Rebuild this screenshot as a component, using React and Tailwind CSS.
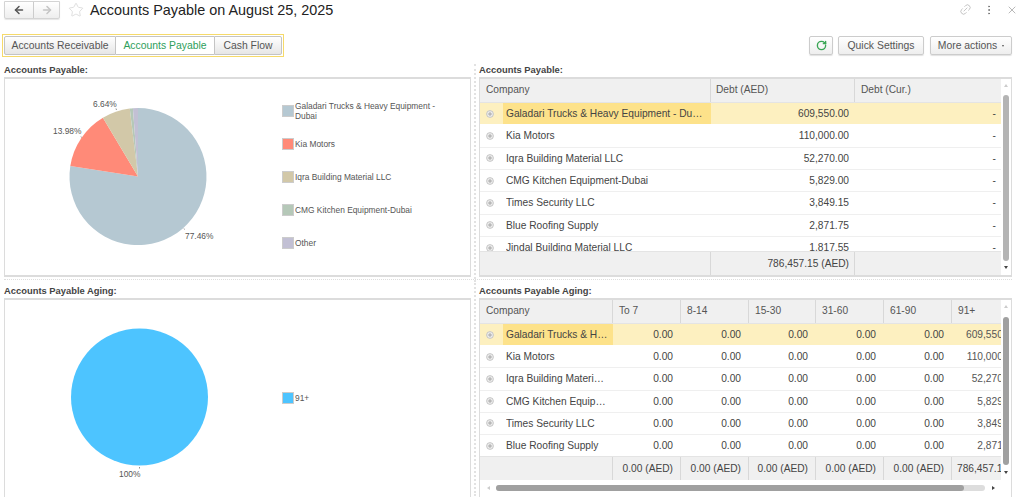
import React from 'react'
import { ArrowLeft, ArrowRight, Star, Link2, EllipsisVertical, X, RotateCw } from 'lucide-react'

const payable = [
  ['Galadari Trucks & Heavy Equipment - Dubai', '609,550.00'],
  ['Kia Motors', '110,000.00'],
  ['Iqra Building Material LLC', '52,270.00'],
  ['CMG Kitchen Equipment-Dubai', '5,829.00'],
  ['Times Security LLC', '3,849.15'],
  ['Blue Roofing Supply', '2,871.75'],
  ['Jindal Building Material LLC', '1,817.55'],
]

const slices = [
  [77.46, '#b5c8d2'],
  [13.98, '#ff8a78'],
  [6.64, '#d2c8a8'],
  [0.74, '#b5c8b8'],
  [1.18, '#c2c0d4'],
]

const legend = [
  ['Galadari Trucks & Heavy Equipment - Dubai', '#b5c8d2'],
  ['Kia Motors', '#ff8a78'],
  ['Iqra Building Material LLC', '#d2c8a8'],
  ['CMG Kitchen Equipment-Dubai', '#b5c8b8'],
  ['Other', '#c2c0d4'],
]

const agingCols = ['w-[68px]', 'w-[68px]', 'w-[67px]', 'w-[68px]', 'w-[68px]', 'w-[68px]']

const Pie = () => {
  let start = 0
  const point = (pct) => {
    const a = (pct / 100) * 2 * Math.PI
    return [100 + 68.5 * Math.sin(a), 97.6 - 68.5 * Math.cos(a)]
  }
  return (
    <svg width="200" height="196" viewBox="0 0 200 196" className="shrink-0 ml-[33px]">
      {slices.map(([pct, color]) => {
        const [x1, y1] = point(start)
        const [x2, y2] = point(start + pct)
        const large = pct > 50 ? 1 : 0
        start += pct
        return <path key={color} d={`M100 97.6 L${x1} ${y1} A68.5 68.5 0 ${large} 1 ${x2} ${y2} Z`} fill={color} />
      })}
      <g fontSize="8.4" fill="#555" fontFamily="'Liberation Sans', Arial, sans-serif">
        <text x="55" y="28">6.64%</text>
        <text x="15" y="55">13.98%</text>
        <text x="147" y="160">77.46%</text>
      </g>
      <path d="M78 29.500l.5 1.500M43 57.500l.5 1M146 149.500l.5 1" stroke="#666" strokeWidth="0.7" />
    </svg>
  )
}

const FullPie = () => (
  <svg width="200" height="196" viewBox="0 0 200 196" className="shrink-0 ml-[33px]">
    <circle cx="101.5" cy="97" r="68.5" fill="#4dc4ff" />
    <text x="81" y="177" fontSize="8.4" fill="#555" fontFamily="'Liberation Sans', Arial, sans-serif">100%</text>
    <path d="M101.5 167v1.500" stroke="#666" strokeWidth="0.7" />
  </svg>
)

const Swatch = ({ color }) => (
  <span className="w-[12px] h-[12px] shrink-0 border border-[#ccc]" style={{ backgroundColor: color }} />
)

const Expander = () => (
  <svg width="8" height="8" viewBox="0 0 8 8" className="shrink-0 ml-[6px] mr-[3px]">
    <circle cx="4" cy="4" r="3.400" fill="#eee" stroke="#bbb" strokeWidth="0.8" />
    <path d="M2 4h4M4 2v4" stroke="#999" strokeWidth="0.8" />
  </svg>
)

const VScroll = ({ thumb, height, thumbClass }) => (
  <div className={`relative w-[10px] shrink-0 bg-white ${height}`}>
    <span className="absolute left-[3px] top-[5px] border-x-[2px] border-b-[3px] border-x-transparent border-b-[#ccc]" />
    <span className={`absolute left-[2px] w-[6px] rounded-[3px] ${thumb} ${thumbClass}`} />
    <span className="absolute left-[3px] bottom-[6px] border-x-[2px] border-t-[3px] border-x-transparent border-t-[#444]" />
  </div>
)

const GrayButton = ({ children, className }) => (
  <button className={`h-[19px] flex items-center justify-center border border-[#ccc] rounded-[2px] bg-gradient-to-b from-white to-[#eeeeee] shadow-[0_1px_1px_rgba(0,0,0,0.12)] text-[10.4px] text-[#555] ${className}`}>
    {children}
  </button>
)

const PanelTitle = ({ children }) => (
  <div className="h-[13px] text-[9.4px] leading-[11px] font-bold text-[#444] whitespace-nowrap">{children}</div>
)

const PayableTable = () => (
  <div className="flex h-[200px] border-2 border-[#dcdcdc] border-x-[1px] text-[10.2px] text-[#444]">
    <div className="w-[521px] flex flex-col">
      <div className="flex h-[24px] bg-[#f0f0f0] items-center text-[#555] shrink-0 border-b border-[#e4e4e4]">
        <div className="w-[231px] h-full flex items-center pl-[6px] pb-[1px] border-r border-[#d8d8d8]">Company</div>
        <div className="w-[144px] h-full flex items-center pl-[5px] pb-[1px] border-r border-[#d8d8d8]">Debt (AED)</div>
        <div className="flex-1 pl-[6px] pb-[1px]">Debt (Cur.)</div>
      </div>
      <div className="flex-1 overflow-hidden">
        {payable.map(([name, debt], i) => (
          <div key={name} className={`flex h-[22.33px] items-center border-b ${i === 0 ? 'bg-[#fdf0c0] border-white' : 'bg-white border-[#efefef]'}`}>
            <div className="w-[231px] h-full flex items-center">
              <Expander />
              <div className={`flex-1 h-full flex items-center pl-[3px] ml-[6px] min-w-0 ${i === 0 ? 'bg-[#fde28a]' : ''}`}>
                <span className="truncate pr-[6px]">{name}</span>
              </div>
            </div>
            <div className="w-[144px] text-right pr-[6px]">{debt}</div>
            <div className="flex-1 text-right pr-[5px]">-</div>
          </div>
        ))}
      </div>
      <div className="flex h-[24px] bg-[#f0f0f0] items-center shrink-0 border-t border-[#e4e4e4]">
        <div className="w-[231px] h-full border-r border-[#d8d8d8]" />
        <div className="w-[144px] h-full flex items-center justify-end pr-[5px] border-r border-[#d8d8d8]">786,457.15 (AED)</div>
      </div>
    </div>
    <VScroll height="h-full" thumb="top-[16px] h-[166px]" thumbClass="bg-[#b4b4b4]" />
  </div>
)

const AgingTable = () => (
  <div className="h-[200px] border-t-2 border-x border-[#dcdcdc] text-[10.2px] text-[#444] flex flex-col">
    <div className="flex h-[180px] shrink-0">
      <div className="w-[521px] flex flex-col overflow-hidden">
        <div className="flex h-[24px] bg-[#f0f0f0] items-center text-[#555] shrink-0 border-b border-[#e4e4e4]">
          <div className="w-[133px] shrink-0 h-full flex items-center pl-[6px] pb-[1px] border-r border-[#d8d8d8]">Company</div>
          {['To 7', '8-14', '15-30', '31-60', '61-90', '91+'].map((h, i) => (
            <div key={h} className={`${agingCols[i]} shrink-0 h-full flex items-center pl-[6px] pb-[1px] border-r border-[#d8d8d8]`}>{h}</div>
          ))}
        </div>
        <div className="flex-1 overflow-hidden">
          {payable.slice(0, 6).map(([name, debt], i) => (
            <div key={name} className={`flex h-[22.2px] items-center border-b ${i === 0 ? 'bg-[#fdf0c0] border-white' : 'bg-white border-[#efefef]'}`}>
              <div className="w-[133px] shrink-0 h-full flex items-center">
                <Expander />
                <div className={`flex-1 h-full flex items-center pl-[3px] ml-[6px] min-w-0 ${i === 0 ? 'bg-[#fde28a]' : ''}`}>
                  <span className="truncate pr-[5px]">{name}</span>
                </div>
              </div>
              {agingCols.map((w, c) => (
                <div key={c} className={`shrink-0 text-right ${c === 5 ? 'w-[73px] pr-[8px] text-[#555]' : `${w} pr-[8px]`}`}>{c === 5 ? debt : '0.00'}</div>
              ))}
            </div>
          ))}
        </div>
        <div className="flex h-[24px] bg-[#f0f0f0] items-center shrink-0 border-t border-[#e4e4e4]">
          <div className="w-[133px] shrink-0 h-full border-r border-[#d8d8d8]" />
          {agingCols.map((w, c) => (
            <div key={c} className={`shrink-0 h-full flex items-center whitespace-nowrap ${c === 5 ? 'w-[73px] justify-start pl-[5px]' : `${w} justify-end pr-[7px] border-r border-[#d8d8d8]`}`}>{c === 5 ? '786,457.15 (AED)' : '0.00 (AED)'}</div>
          ))}
        </div>
      </div>
      <VScroll height="h-full" thumb="top-[17px] h-[148px]" thumbClass="bg-[#a0a0a0]" />
    </div>
    <div className="flex items-center h-[15px] pl-[7px]">
      <span className="border-y-[2px] border-r-[3px] border-y-transparent border-r-[#ccc]" />
      <div className="ml-[6px] w-[489px] h-[6px] rounded-[3px] bg-[#dddddd]">
        <div className="w-[468px] h-full rounded-[3px] bg-[#a0a0a0]" />
      </div>
      <span className="ml-[7px] border-y-[2px] border-l-[3px] border-y-transparent border-l-[#444]" />
    </div>
  </div>
)

export default function App() {
  return (
    <div className="w-[1024px] h-[497px] overflow-hidden bg-white font-['Liberation_Sans',Arial,sans-serif]">
      <header className="flex items-center h-[19px] pl-[4px] pr-[6px]">
        <div className="flex h-[18px] w-[56px] border border-[#d4d4d4] rounded-b-[2px] bg-gradient-to-b from-white to-[#eeeeee] shadow-[0_1px_1px_rgba(0,0,0,0.1)]">
          <div className="w-[29px] flex items-center justify-center border-r border-[#ccc]">
            <ArrowLeft size={12} strokeWidth={3} className="text-[#555]" />
          </div>
          <div className="flex-1 flex items-center justify-center">
            <ArrowRight size={12} strokeWidth={3} className="text-[#c4c4c4]" />
          </div>
        </div>
        <Star size={16} strokeWidth={1} className="ml-[8px] text-[#cfcfcf]" />
        <h1 className="ml-[6px] text-[14.4px] leading-[18px] text-[#222]">Accounts Payable on August 25, 2025</h1>
        <Link2 size={13} strokeWidth={1.2} className="ml-auto text-[#aaa] -rotate-45" />
        <EllipsisVertical size={12} strokeWidth={2} className="ml-[11px] text-[#777]" />
        <X size={12} strokeWidth={1.2} className="ml-[11px] text-[#888]" />
      </header>

      <div className="flex items-start justify-between h-[30px] mt-[15px] pl-[2px] pr-[12px]">
        <div className="flex h-[23px] p-[1px] border border-[#f6da6a]">
          <button className="w-[112px] h-[19px] border border-[#c4c4c4] rounded-l-[2px] bg-gradient-to-b from-white to-[#e6e6e6] text-[10.4px] text-[#555]">Accounts Receivable</button>
          <button className="w-[98px] h-[19px] border-y border-[#c4c4c4] bg-white text-[10.4px] text-[#2e9e5b]">Accounts Payable</button>
          <button className="w-[68px] h-[19px] border border-[#c4c4c4] rounded-r-[2px] bg-gradient-to-b from-white to-[#e6e6e6] text-[10.4px] text-[#555]">Cash Flow</button>
        </div>
        <div className="flex mt-[2px]">
          <GrayButton className="w-[24px]"><RotateCw size={11} strokeWidth={3} className="text-[#3aa655]" /></GrayButton>
          <GrayButton className="w-[86px] ml-[5px]">Quick Settings</GrayButton>
          <GrayButton className="w-[82px] ml-[6px] gap-[5px]">
            More actions
            <span className="border-x-[1.5px] border-t-[2px] border-x-transparent border-t-[#555]" />
          </GrayButton>
        </div>
      </div>

      <section className="flex h-[216px] border-b border-dotted border-[#dddddd] mx-[4px] w-[1008px]">
        <div className="w-[467px] mr-[3px]">
          <PanelTitle>Accounts Payable:</PanelTitle>
          <div className="flex h-[200px] border-2 border-[#dcdcdc] border-x-[1px]">
            <Pie />
            <ul className="ml-[44px] w-[160px] flex flex-col justify-center text-[8.4px] leading-[10px] text-[#555] mt-[-1px]">
              {legend.map(([name, color]) => (
                <li key={name} className="flex items-center gap-[1px] h-[33px]">
                  <Swatch color={color} />
                  <span>{name}</span>
                </li>
              ))}
            </ul>
          </div>
        </div>
        <div className="w-[538px] pl-[3px] border-l-2 border-dotted border-[#e2e2e2]">
          <PanelTitle>Accounts Payable:</PanelTitle>
          <PayableTable />
        </div>
      </section>

      <section className="flex h-[216px] mx-[4px] w-[1008px]">
        <div className="w-[467px] mr-[3px] pt-[5px]">
          <PanelTitle>Accounts Payable Aging:</PanelTitle>
          <div className="flex h-[200px] border-t-2 border-x border-[#dcdcdc]">
            <FullPie />
            <div className="ml-[44px] flex items-center h-[196px] text-[8.4px] text-[#555]">
              <Swatch color="#4dc4ff" />
              <span className="ml-[1px]">91+</span>
            </div>
          </div>
        </div>
        <div className="w-[538px] pl-[3px] pt-[5px] border-l-2 border-dotted border-[#e2e2e2]">
          <PanelTitle>Accounts Payable Aging:</PanelTitle>
          <AgingTable />
        </div>
      </section>
    </div>
  )
}
